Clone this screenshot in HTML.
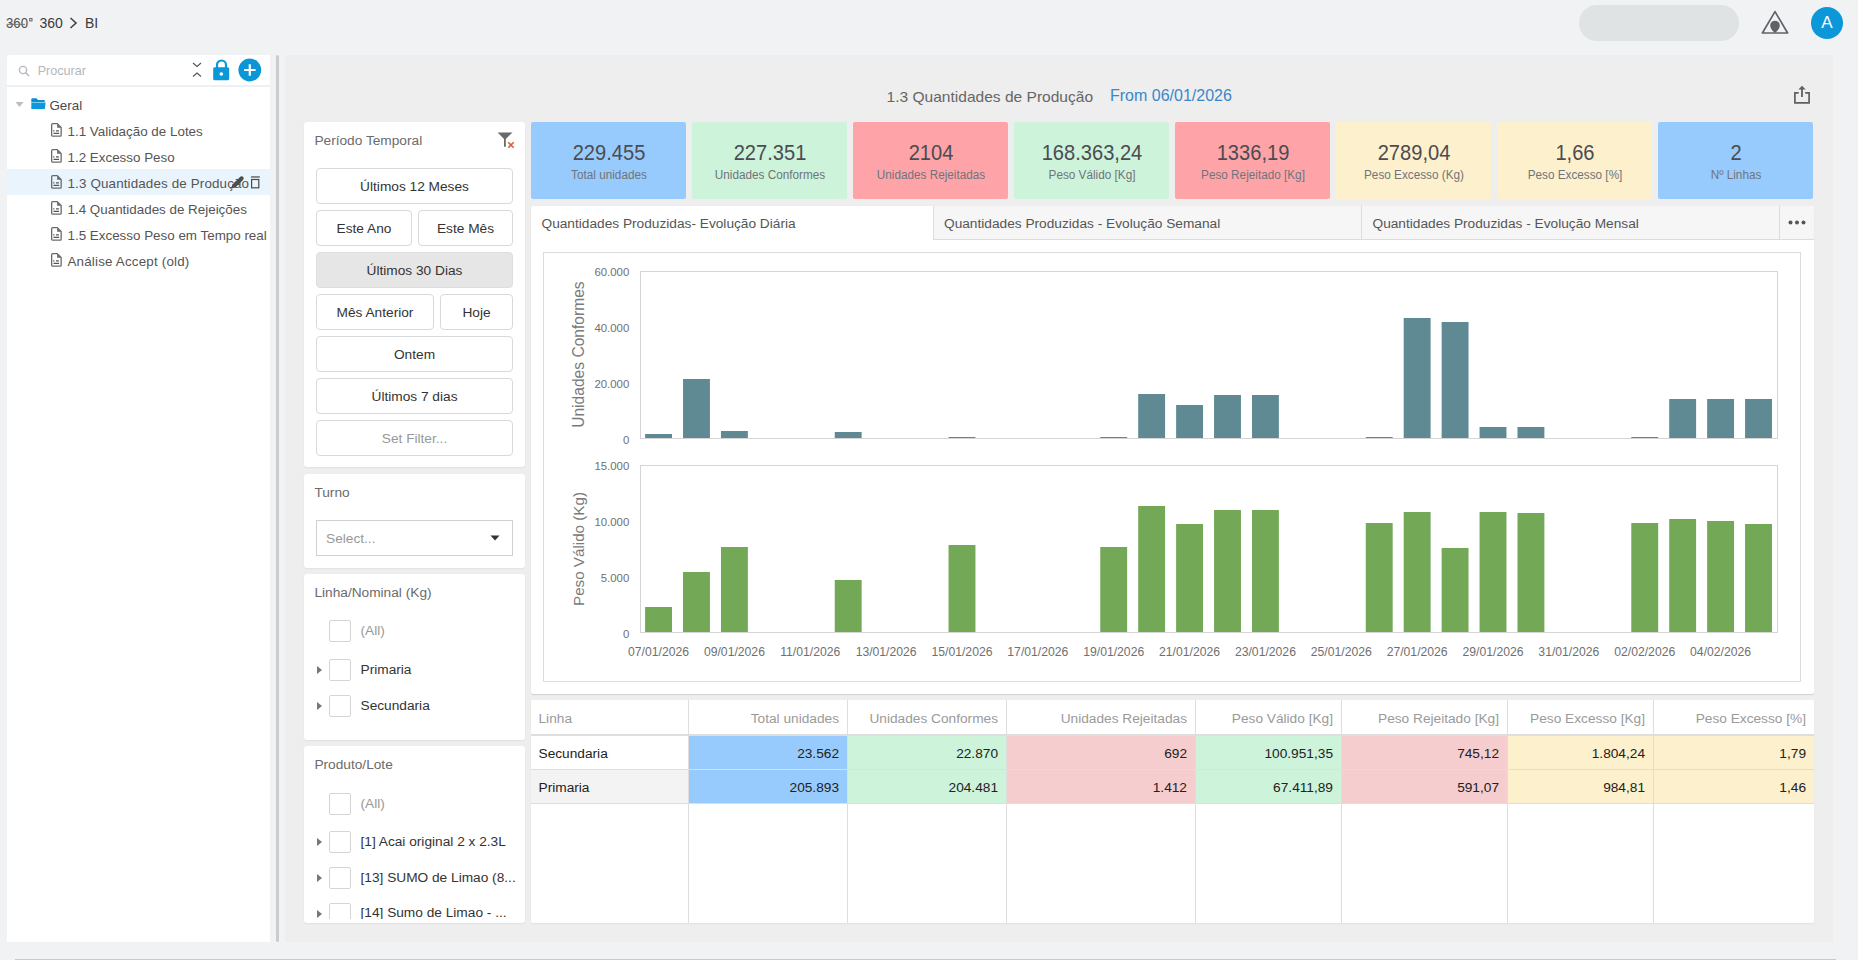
<!DOCTYPE html>
<html><head><meta charset="utf-8">
<style>
*{box-sizing:border-box;margin:0;padding:0}
html,body{width:1858px;height:960px;overflow:hidden;background:#f1f2f4;font-family:"Liberation Sans",sans-serif;color:#333;position:relative}
.a{position:absolute;white-space:nowrap}
.t{position:absolute;white-space:nowrap;line-height:1}
/* top bar */
#crumb{left:6px;top:15px;font-size:14px;color:#333}
#pill{left:1579px;top:5px;width:160px;height:36px;border-radius:18px;background:#dfe3e4}
#avatar{left:1811px;top:7px;width:32px;height:32px;border-radius:50%;background:#0c97d9;color:#fff;font-size:17px;text-align:center;line-height:32px}
/* left panel */
#left{left:7px;top:55px;width:263px;height:887px;background:#fff;border-top-left-radius:3px}
#sep{left:7px;top:85px;width:263px;height:2px;background:#eef0f2}
#scroll{left:276px;top:55px;width:3px;height:887px;background:#cbccd1;border-radius:2px}
.tree{font-size:13.4px;color:#555}
/* main */
#main{left:285px;top:55px;width:1548px;height:887px;background:#eeeeee}
.panel{position:absolute;background:#fff;border-radius:3px;box-shadow:0 1px 2px rgba(0,0,0,.06)}
.ptitle{position:absolute;font-size:13.7px;color:#6b6b6b;white-space:nowrap;line-height:1}
.btn{position:absolute;height:36px;border:1px solid #d9d9d9;border-radius:4px;background:#fff;font-size:13.7px;color:#333;display:flex;align-items:center;justify-content:center;white-space:nowrap}
.cb{position:absolute;width:22px;height:22px;border:1px solid #d4d4d4;border-radius:2px;background:#fff}
.cbt{position:absolute;font-size:13.7px;color:#333;white-space:nowrap;line-height:1}
.tri{position:absolute;width:0;height:0;border-top:4px solid transparent;border-bottom:4px solid transparent;border-left:5px solid #777}
.card{position:absolute;top:122px;width:155px;height:77px;border-radius:2px;text-align:center}
.card .v{position:absolute;left:0;right:0;top:143px;font-size:20px;color:#444;line-height:1}
.card .l{position:absolute;left:0;right:0;font-size:11.8px;color:#6b6f75;line-height:1}
.tab{position:absolute;top:206px;height:34px;font-size:13.7px;color:#555;white-space:nowrap}
.th{position:absolute;font-size:13.7px;color:#9a9a9a;white-space:nowrap;line-height:1}
.td{position:absolute;font-size:13.7px;color:#222;white-space:nowrap;line-height:1}
</style></head><body>
<div class="a" id="pill"></div>
<div class="a" id="avatar">A</div>
<div class="a" id="left"></div>
<div class="a" id="sep"></div>
<div class="a" id="scroll"></div>
<div class="a" id="main"></div>
<svg class="a" style="left:4px;top:14px" width="32" height="18" viewBox="0 0 32 18"><text x="2" y="14" font-family="Liberation Sans" font-size="13.8" fill="#505050" textLength="22" lengthAdjust="spacingAndGlyphs">360</text><path d="M2.5 10.4 H21" stroke="#6f6f6f" stroke-width="0.9"/><rect x="25.7" y="4.5" width="2.3" height="2.4" fill="none" stroke="#666" stroke-width="1"/></svg>
<div class="t" style="top:16.10px;font-size:14px;left:39.4px;color:#3a3a3a;">360</div>
<svg class="a" style="left:69px;top:17px" width="9" height="12" viewBox="0 0 9 12"><path d="M1.5 1 L7 6 L1.5 11" fill="none" stroke="#444" stroke-width="1.6"/></svg>
<div class="t" style="top:16.10px;font-size:14px;left:85px;color:#3a3a3a;">BI</div>
<svg class="a" style="left:1760px;top:9px" width="30" height="27" viewBox="0 0 30 27"><path d="M15 2.6 L27.6 24 L2.4 24 Z" fill="none" stroke="#616167" stroke-width="1.7" stroke-linejoin="round"/><path d="M10.2 16.5 a4.8 4.8 0 1 1 9.6 0 c0 3-2.6 5.5-4.8 7.5 c-2.2-2-4.8-4.5-4.8-7.5z" fill="#616167"/></svg>
<svg class="a" style="left:18px;top:65px" width="13" height="12" viewBox="0 0 13 12"><circle cx="5" cy="5" r="3.6" fill="none" stroke="#b4b8bf" stroke-width="1.4"/><path d="M7.6 7.6 L11 11" stroke="#b4b8bf" stroke-width="1.5"/></svg>
<div class="t" style="top:64.92px;font-size:12.6px;left:37.7px;color:#b3b7bd;">Procurar</div>
<svg class="a" style="left:192px;top:61px" width="10" height="17" viewBox="0 0 10 17"><path d="M1 2 L5 5.5 L9 2 M1 15.5 L5 12 L9 15.5" fill="none" stroke="#555" stroke-width="1.1"/></svg>
<svg class="a" style="left:213px;top:59px" width="17" height="22" viewBox="0 0 17 22"><path d="M4 9 V6 a4.5 4.5 0 0 1 9 0 V9" fill="none" stroke="#0a98d8" stroke-width="2.2"/><rect x="0.2" y="8.2" width="16" height="13" rx="1.5" fill="#0a98d8"/><circle cx="8.3" cy="15" r="1.8" fill="#fff"/></svg>
<svg class="a" style="left:238px;top:58px" width="24" height="24" viewBox="0 0 24 24"><circle cx="11.8" cy="12" r="11.4" fill="#0b96d6"/><path d="M11.8 6.2 V17.8 M6 12 H17.6" stroke="#fff" stroke-width="2.2"/></svg>
<svg class="a" style="left:15px;top:101px" width="9" height="7" viewBox="0 0 9 7"><path d="M0.5 1 L8.5 1 L4.5 6 Z" fill="#b9bdc3"/></svg>
<svg class="a" style="left:31px;top:98px" width="15" height="12" viewBox="0 0 15 12"><path d="M0.3 1.2 Q0.3 0.3 1.2 0.3 H5.5 L7 2 H13 Q13.8 2 13.8 2.8 V4 H0.3 Z" fill="#0a8fd6"/><path d="M0.3 4.6 H14.6 L13.8 11 H0.3 Z" fill="#0a98de"/></svg>
<div class="t" style="top:99.28px;font-size:13.4px;left:49.4px;color:#4a4a4a;">Geral</div>
<div class="a" style="left:7px;top:169px;width:263px;height:26px;background:#e9f4fc"></div>
<svg class="a" style="left:51px;top:123px" width="12" height="14" viewBox="0 0 12 14"><path d="M1.7 0.65 H6.2 L10.15 4.6 V12.2 Q10.15 13.05 9.3 13.05 H1.5 Q0.65 13.05 0.65 12.2 V1.7 Q0.65 0.65 1.7 0.65 Z" fill="none" stroke="#6a6a6a" stroke-width="1.3"/><path d="M6.1 0.65 V4.7 H10.15 Z" fill="#6a6a6a"/><path d="M2.2 7.9 H3.4 M5 7.9 H7.9 M2.5 10.4 H8.1" stroke="#555" stroke-width="1.2"/></svg>
<div class="t" style="top:124.98px;font-size:13.4px;left:67.5px;color:#555;">1.1 Validação de Lotes</div>
<svg class="a" style="left:51px;top:149px" width="12" height="14" viewBox="0 0 12 14"><path d="M1.7 0.65 H6.2 L10.15 4.6 V12.2 Q10.15 13.05 9.3 13.05 H1.5 Q0.65 13.05 0.65 12.2 V1.7 Q0.65 0.65 1.7 0.65 Z" fill="none" stroke="#6a6a6a" stroke-width="1.3"/><path d="M6.1 0.65 V4.7 H10.15 Z" fill="#6a6a6a"/><path d="M2.2 7.9 H3.4 M5 7.9 H7.9 M2.5 10.4 H8.1" stroke="#555" stroke-width="1.2"/></svg>
<div class="t" style="top:150.98px;font-size:13.4px;left:67.5px;color:#555;">1.2 Excesso Peso</div>
<svg class="a" style="left:51px;top:175px" width="12" height="14" viewBox="0 0 12 14"><path d="M1.7 0.65 H6.2 L10.15 4.6 V12.2 Q10.15 13.05 9.3 13.05 H1.5 Q0.65 13.05 0.65 12.2 V1.7 Q0.65 0.65 1.7 0.65 Z" fill="none" stroke="#6a6a6a" stroke-width="1.3"/><path d="M6.1 0.65 V4.7 H10.15 Z" fill="#6a6a6a"/><path d="M2.2 7.9 H3.4 M5 7.9 H7.9 M2.5 10.4 H8.1" stroke="#555" stroke-width="1.2"/></svg>
<div class="t" style="top:176.98px;font-size:13.4px;left:67.5px;color:#555;letter-spacing:0.14px;">1.3 Quantidades de Produção</div>
<svg class="a" style="left:51px;top:201px" width="12" height="14" viewBox="0 0 12 14"><path d="M1.7 0.65 H6.2 L10.15 4.6 V12.2 Q10.15 13.05 9.3 13.05 H1.5 Q0.65 13.05 0.65 12.2 V1.7 Q0.65 0.65 1.7 0.65 Z" fill="none" stroke="#6a6a6a" stroke-width="1.3"/><path d="M6.1 0.65 V4.7 H10.15 Z" fill="#6a6a6a"/><path d="M2.2 7.9 H3.4 M5 7.9 H7.9 M2.5 10.4 H8.1" stroke="#555" stroke-width="1.2"/></svg>
<div class="t" style="top:202.98px;font-size:13.4px;left:67.5px;color:#555;">1.4 Quantidades de Rejeições</div>
<svg class="a" style="left:51px;top:227px" width="12" height="14" viewBox="0 0 12 14"><path d="M1.7 0.65 H6.2 L10.15 4.6 V12.2 Q10.15 13.05 9.3 13.05 H1.5 Q0.65 13.05 0.65 12.2 V1.7 Q0.65 0.65 1.7 0.65 Z" fill="none" stroke="#6a6a6a" stroke-width="1.3"/><path d="M6.1 0.65 V4.7 H10.15 Z" fill="#6a6a6a"/><path d="M2.2 7.9 H3.4 M5 7.9 H7.9 M2.5 10.4 H8.1" stroke="#555" stroke-width="1.2"/></svg>
<div class="t" style="top:228.98px;font-size:13.4px;left:67.5px;color:#555;">1.5 Excesso Peso em Tempo real</div>
<svg class="a" style="left:51px;top:253px" width="12" height="14" viewBox="0 0 12 14"><path d="M1.7 0.65 H6.2 L10.15 4.6 V12.2 Q10.15 13.05 9.3 13.05 H1.5 Q0.65 13.05 0.65 12.2 V1.7 Q0.65 0.65 1.7 0.65 Z" fill="none" stroke="#6a6a6a" stroke-width="1.3"/><path d="M6.1 0.65 V4.7 H10.15 Z" fill="#6a6a6a"/><path d="M2.2 7.9 H3.4 M5 7.9 H7.9 M2.5 10.4 H8.1" stroke="#555" stroke-width="1.2"/></svg>
<div class="t" style="top:254.98px;font-size:13.4px;left:67.5px;color:#555;letter-spacing:0.18px;">Análise Accept (old)</div>
<svg class="a" style="left:229px;top:174px" width="16" height="16" viewBox="0 0 16 16"><path d="M2.3 14.6 L3.4 10.6 L10.8 3.2 L13.8 6.2 L6.4 13.6 Z" fill="#4d4d4d"/><circle cx="12.6" cy="4.3" r="2" fill="#4d4d4d"/></svg>
<svg class="a" style="left:250px;top:175px" width="11" height="14" viewBox="0 0 11 14"><rect x="1" y="1.2" width="8.8" height="1.5" fill="#6a6a6a"/><rect x="1.6" y="4.5" width="7.2" height="8.3" fill="none" stroke="#4a4a4a" stroke-width="1.2"/></svg>
<div class="t" style="top:88.56px;font-size:15.55px;left:886.5px;color:#666;">1.3 Quantidades de Produção</div>
<div class="t" style="top:88.20px;font-size:16px;left:1110px;color:#3b86c8;">From 06/01/2026</div>
<svg class="a" style="left:1793px;top:85px" width="18" height="20" viewBox="0 0 18 20"><path d="M5.7 7.9 H1.9 V17.9 H16.1 V7.9 H12.2" fill="none" stroke="#5f5f5f" stroke-width="1.7"/><path d="M5.4 4.6 L9 0.8 L12.7 4.6 Z" fill="#5f5f5f"/><path d="M9 3.5 V11.9" stroke="#5f5f5f" stroke-width="1.8"/></svg>
<div class="panel" style="left:304px;top:122px;width:221px;height:345px"></div>
<div class="t" style="top:134.04px;font-size:13.7px;left:314.4px;color:#6b6b6b;">Período Temporal</div>
<svg class="a" style="left:497px;top:131px" width="19" height="19" viewBox="0 0 19 19"><path d="M0.6 1.4 H15.5 L8.8 8 V15.7 H7 V8 Z" fill="#6a6a6a"/><path d="M11.3 11.3 L16.7 16.7 M16.7 11.3 L11.3 16.7" stroke="#d8603a" stroke-width="1.6"/></svg>
<div class="btn" style="left:316px;top:168px;width:197px;color:#333;">Últimos 12 Meses</div>
<div class="btn" style="left:316px;top:210px;width:96px;color:#333;">Este Ano</div>
<div class="btn" style="left:418px;top:210px;width:95px;color:#333;">Este Mês</div>
<div class="btn" style="left:316px;top:252px;width:197px;color:#333;background:#e6e6e6;border-color:#dedede;">Últimos 30 Dias</div>
<div class="btn" style="left:316px;top:294px;width:118px;color:#333;">Mês Anterior</div>
<div class="btn" style="left:440px;top:294px;width:73px;color:#333;">Hoje</div>
<div class="btn" style="left:316px;top:336px;width:197px;color:#333;">Ontem</div>
<div class="btn" style="left:316px;top:378px;width:197px;color:#333;">Últimos 7 dias</div>
<div class="btn" style="left:316px;top:420px;width:197px;color:#999;">Set Filter...</div>
<div class="panel" style="left:304px;top:474px;width:221px;height:94px"></div>
<div class="t" style="top:486.34px;font-size:13.7px;left:314.4px;color:#6b6b6b;">Turno</div>
<div class="a" style="left:316px;top:520px;width:197px;height:36px;border:1px solid #d0d0d0;background:#fff"></div>
<div class="t" style="top:531.54px;font-size:13.7px;left:326px;color:#999;">Select...</div>
<svg class="a" style="left:490px;top:535px" width="10" height="6" viewBox="0 0 10 6"><path d="M0.5 0.5 H9.5 L5 5.5 Z" fill="#333"/></svg>
<div class="panel" style="left:304px;top:574px;width:221px;height:166px"></div>
<div class="t" style="top:586.04px;font-size:13.7px;left:314.4px;color:#6b6b6b;">Linha/Nominal (Kg)</div>
<div class="cb" style="left:329px;top:620px"></div>
<div class="t" style="top:624.04px;font-size:13.7px;left:360.5px;color:#999;">(All)</div>
<div class="cb" style="left:329px;top:659px"></div>
<div class="tri" style="left:317px;top:666px"></div>
<div class="t" style="top:663.04px;font-size:13.7px;left:360.5px;color:#333;">Primaria</div>
<div class="cb" style="left:329px;top:695px"></div>
<div class="tri" style="left:317px;top:702px"></div>
<div class="t" style="top:699.04px;font-size:13.7px;left:360.5px;color:#333;">Secundaria</div>
<div class="panel" style="left:304px;top:746px;width:221px;height:177px;overflow:hidden">
</div>
<div class="t" style="top:757.84px;font-size:13.7px;left:314.4px;color:#6b6b6b;">Produto/Lote</div>
<div class="cb" style="left:329px;top:793px"></div>
<div class="t" style="top:797.04px;font-size:13.7px;left:360.5px;color:#999;">(All)</div>
<div class="cb" style="left:329px;top:831px"></div>
<div class="tri" style="left:317px;top:838px"></div>
<div class="t" style="top:835.04px;font-size:13.7px;left:360.5px;color:#333;">[1] Acai original 2 x 2.3L</div>
<div class="cb" style="left:329px;top:867px"></div>
<div class="tri" style="left:317px;top:874px"></div>
<div class="t" style="top:871.04px;font-size:13.7px;left:360.5px;color:#333;">[13] SUMO de Limao (8...</div>
<div class="a" style="left:304px;top:903px;width:221px;height:16px;overflow:hidden"><div class="cb" style="left:25px;top:0px"></div><div class="tri" style="left:13px;top:6.5px"></div><div class="t" style="left:56.5px;top:3.40px;font-size:13.7px;color:#333">[14] Sumo de Limao - ...</div></div>
<div class="card" style="left:531.0px;background:#98cbfd"></div>
<div class="t" style="top:143.40px;font-size:21.5px;left:308.5px;width:600px;text-align:center;color:#4b4b52;transform:scaleX(0.935);">229.455</div>
<div class="t" style="top:169.20px;font-size:12.5px;left:308.5px;width:600px;text-align:center;color:#70747a;transform:scaleX(0.94);">Total unidades</div>
<div class="card" style="left:692.0px;background:#cdf3da"></div>
<div class="t" style="top:143.40px;font-size:21.5px;left:469.5px;width:600px;text-align:center;color:#4b4b52;transform:scaleX(0.935);">227.351</div>
<div class="t" style="top:169.20px;font-size:12.5px;left:469.5px;width:600px;text-align:center;color:#70747a;transform:scaleX(0.94);">Unidades Conformes</div>
<div class="card" style="left:853.0px;background:#fea4a9"></div>
<div class="t" style="top:143.40px;font-size:21.5px;left:630.5px;width:600px;text-align:center;color:#4b4b52;transform:scaleX(0.935);">2104</div>
<div class="t" style="top:169.20px;font-size:12.5px;left:630.5px;width:600px;text-align:center;color:#70747a;transform:scaleX(0.94);">Unidades Rejeitadas</div>
<div class="card" style="left:1014.0px;background:#cdf3da"></div>
<div class="t" style="top:143.40px;font-size:21.5px;left:791.5px;width:600px;text-align:center;color:#4b4b52;transform:scaleX(0.935);">168.363,24</div>
<div class="t" style="top:169.20px;font-size:12.5px;left:791.5px;width:600px;text-align:center;color:#70747a;transform:scaleX(0.94);">Peso Válido [Kg]</div>
<div class="card" style="left:1175.0px;background:#fea4a9"></div>
<div class="t" style="top:143.40px;font-size:21.5px;left:952.5px;width:600px;text-align:center;color:#4b4b52;transform:scaleX(0.935);">1336,19</div>
<div class="t" style="top:169.20px;font-size:12.5px;left:952.5px;width:600px;text-align:center;color:#70747a;transform:scaleX(0.94);">Peso Rejeitado [Kg]</div>
<div class="card" style="left:1336.0px;background:#fdf0cc"></div>
<div class="t" style="top:143.40px;font-size:21.5px;left:1113.5px;width:600px;text-align:center;color:#4b4b52;transform:scaleX(0.935);">2789,04</div>
<div class="t" style="top:169.20px;font-size:12.5px;left:1113.5px;width:600px;text-align:center;color:#70747a;transform:scaleX(0.94);">Peso Excesso (Kg)</div>
<div class="card" style="left:1497.0px;background:#fdf0cc"></div>
<div class="t" style="top:143.40px;font-size:21.5px;left:1274.5px;width:600px;text-align:center;color:#4b4b52;transform:scaleX(0.935);">1,66</div>
<div class="t" style="top:169.20px;font-size:12.5px;left:1274.5px;width:600px;text-align:center;color:#70747a;transform:scaleX(0.94);">Peso Excesso [%]</div>
<div class="card" style="left:1658.0px;background:#98cbfd"></div>
<div class="t" style="top:143.40px;font-size:21.5px;left:1435.5px;width:600px;text-align:center;color:#4b4b52;transform:scaleX(0.935);">2</div>
<div class="t" style="top:169.20px;font-size:12.5px;left:1435.5px;width:600px;text-align:center;color:#70747a;transform:scaleX(0.94);">Nº Linhas</div>
<div class="panel" style="left:531px;top:206px;width:1283px;height:488px;border-radius:2px;box-shadow:0 1px 1px rgba(0,0,0,.13)"></div>
<div class="a" style="left:933px;top:206px;width:881px;height:34px;background:#f6f6f6;border-bottom:1px solid #dcdcdc;border-left:1px solid #dcdcdc;border-top-right-radius:2px"></div>
<div class="a" style="left:1361px;top:206px;width:1px;height:34px;background:#dcdcdc"></div>
<div class="a" style="left:1779px;top:206px;width:1px;height:34px;background:#dcdcdc"></div>
<div class="t" style="top:217.04px;font-size:13.7px;left:541.5px;color:#555;">Quantidades Produzidas- Evolução Diária</div>
<div class="t" style="top:217.04px;font-size:13.7px;left:944px;color:#555;">Quantidades Produzidas - Evolução Semanal</div>
<div class="t" style="top:217.04px;font-size:13.7px;left:1372.5px;color:#555;">Quantidades Produzidas - Evolução Mensal</div>
<svg class="a" style="left:1788px;top:219px" width="18" height="7" viewBox="0 0 18 7"><circle cx="2.5" cy="3.5" r="2" fill="#555"/><circle cx="9" cy="3.5" r="2" fill="#555"/><circle cx="15.5" cy="3.5" r="2" fill="#555"/></svg>
<div class="a" style="left:543px;top:252px;height:430px;border:1px solid #dcdcdc;width:1258px"></div>
<svg class="a" style="left:0;top:0" width="1858" height="960" viewBox="0 0 1858 960" font-family="Liberation Sans"><rect x="640.5" y="271.5" width="1137" height="167" fill="none" stroke="#d4d4d4" stroke-width="1"/><rect x="640.5" y="465.5" width="1137" height="167" fill="none" stroke="#d4d4d4" stroke-width="1"/><rect x="645.10" y="434" width="26.9" height="4" fill="#5f8a94"/><rect x="683.03" y="379" width="26.9" height="59" fill="#5f8a94"/><rect x="720.96" y="431" width="26.9" height="7" fill="#5f8a94"/><rect x="834.75" y="432" width="26.9" height="6" fill="#5f8a94"/><rect x="948.54" y="437" width="26.9" height="1" fill="#5f8a94"/><rect x="1100.26" y="437" width="26.9" height="1" fill="#5f8a94"/><rect x="1138.19" y="394" width="26.9" height="44" fill="#5f8a94"/><rect x="1176.12" y="405" width="26.9" height="33" fill="#5f8a94"/><rect x="1214.05" y="395" width="26.9" height="43" fill="#5f8a94"/><rect x="1251.98" y="395" width="26.9" height="43" fill="#5f8a94"/><rect x="1365.77" y="437" width="26.9" height="1" fill="#5f8a94"/><rect x="1403.70" y="318" width="26.9" height="120" fill="#5f8a94"/><rect x="1441.63" y="322" width="26.9" height="116" fill="#5f8a94"/><rect x="1479.56" y="427" width="26.9" height="11" fill="#5f8a94"/><rect x="1517.49" y="427" width="26.9" height="11" fill="#5f8a94"/><rect x="1631.28" y="437" width="26.9" height="1" fill="#5f8a94"/><rect x="1669.21" y="399" width="26.9" height="39" fill="#5f8a94"/><rect x="1707.14" y="399" width="26.9" height="39" fill="#5f8a94"/><rect x="1745.07" y="399" width="26.9" height="39" fill="#5f8a94"/><rect x="645.10" y="607" width="26.9" height="25" fill="#73a857"/><rect x="683.03" y="572" width="26.9" height="60" fill="#73a857"/><rect x="720.96" y="547" width="26.9" height="85" fill="#73a857"/><rect x="834.75" y="580" width="26.9" height="52" fill="#73a857"/><rect x="948.54" y="545" width="26.9" height="87" fill="#73a857"/><rect x="1100.26" y="547" width="26.9" height="85" fill="#73a857"/><rect x="1138.19" y="506" width="26.9" height="126" fill="#73a857"/><rect x="1176.12" y="524" width="26.9" height="108" fill="#73a857"/><rect x="1214.05" y="510" width="26.9" height="122" fill="#73a857"/><rect x="1251.98" y="510" width="26.9" height="122" fill="#73a857"/><rect x="1365.77" y="523" width="26.9" height="109" fill="#73a857"/><rect x="1403.70" y="512" width="26.9" height="120" fill="#73a857"/><rect x="1441.63" y="548" width="26.9" height="84" fill="#73a857"/><rect x="1479.56" y="512" width="26.9" height="120" fill="#73a857"/><rect x="1517.49" y="513" width="26.9" height="119" fill="#73a857"/><rect x="1631.28" y="523" width="26.9" height="109" fill="#73a857"/><rect x="1669.21" y="519" width="26.9" height="113" fill="#73a857"/><rect x="1707.14" y="521" width="26.9" height="111" fill="#73a857"/><rect x="1745.07" y="524" width="26.9" height="108" fill="#73a857"/><text x="629.3" y="276" font-size="11.4" fill="#707070" text-anchor="end">60.000</text><text x="629.3" y="332.3" font-size="11.4" fill="#707070" text-anchor="end">40.000</text><text x="629.3" y="388" font-size="11.4" fill="#707070" text-anchor="end">20.000</text><text x="629.3" y="443.8" font-size="11.4" fill="#707070" text-anchor="end">0</text><text x="629.3" y="470.3" font-size="11.4" fill="#707070" text-anchor="end">15.000</text><text x="629.3" y="526.2" font-size="11.4" fill="#707070" text-anchor="end">10.000</text><text x="629.3" y="582" font-size="11.4" fill="#707070" text-anchor="end">5.000</text><text x="629.3" y="638" font-size="11.4" fill="#707070" text-anchor="end">0</text><text x="658.55" y="656.3" font-size="12.2" fill="#707070" text-anchor="middle">07/01/2026</text><text x="734.41" y="656.3" font-size="12.2" fill="#707070" text-anchor="middle">09/01/2026</text><text x="810.27" y="656.3" font-size="12.2" fill="#707070" text-anchor="middle">11/01/2026</text><text x="886.13" y="656.3" font-size="12.2" fill="#707070" text-anchor="middle">13/01/2026</text><text x="961.99" y="656.3" font-size="12.2" fill="#707070" text-anchor="middle">15/01/2026</text><text x="1037.85" y="656.3" font-size="12.2" fill="#707070" text-anchor="middle">17/01/2026</text><text x="1113.71" y="656.3" font-size="12.2" fill="#707070" text-anchor="middle">19/01/2026</text><text x="1189.57" y="656.3" font-size="12.2" fill="#707070" text-anchor="middle">21/01/2026</text><text x="1265.43" y="656.3" font-size="12.2" fill="#707070" text-anchor="middle">23/01/2026</text><text x="1341.29" y="656.3" font-size="12.2" fill="#707070" text-anchor="middle">25/01/2026</text><text x="1417.15" y="656.3" font-size="12.2" fill="#707070" text-anchor="middle">27/01/2026</text><text x="1493.01" y="656.3" font-size="12.2" fill="#707070" text-anchor="middle">29/01/2026</text><text x="1568.87" y="656.3" font-size="12.2" fill="#707070" text-anchor="middle">31/01/2026</text><text x="1644.73" y="656.3" font-size="12.2" fill="#707070" text-anchor="middle">02/02/2026</text><text x="1720.59" y="656.3" font-size="12.2" fill="#707070" text-anchor="middle">04/02/2026</text><text transform="translate(584.2,354.6) rotate(-90)" font-size="15.6" fill="#7a7a7a" text-anchor="middle">Unidades Conformes</text><text transform="translate(584.2,549) rotate(-90)" font-size="15.2" fill="#7a7a7a" text-anchor="middle">Peso Válido (Kg)</text></svg>
<div class="panel" style="left:531px;top:700px;width:1283px;height:223px;border-radius:2px"></div>
<div class="a" style="left:531px;top:735.0px;width:157px;height:34.3px;background:#fff"></div>
<div class="a" style="left:688px;top:735.0px;width:159px;height:34.3px;background:#98cbfd"></div>
<div class="a" style="left:847px;top:735.0px;width:159px;height:34.3px;background:#cdf3da"></div>
<div class="a" style="left:1006px;top:735.0px;width:189px;height:34.3px;background:#f5cdcf"></div>
<div class="a" style="left:1195px;top:735.0px;width:146px;height:34.3px;background:#cdf3da"></div>
<div class="a" style="left:1341px;top:735.0px;width:166px;height:34.3px;background:#f5cdcf"></div>
<div class="a" style="left:1507px;top:735.0px;width:146px;height:34.3px;background:#fdf0cc"></div>
<div class="a" style="left:1653px;top:735.0px;width:161px;height:34.3px;background:#fdf0cc"></div>
<div class="a" style="left:531px;top:769.3px;width:157px;height:34.3px;background:#f3f3f3"></div>
<div class="a" style="left:688px;top:769.3px;width:159px;height:34.3px;background:#98cbfd"></div>
<div class="a" style="left:847px;top:769.3px;width:159px;height:34.3px;background:#cdf3da"></div>
<div class="a" style="left:1006px;top:769.3px;width:189px;height:34.3px;background:#f5cdcf"></div>
<div class="a" style="left:1195px;top:769.3px;width:146px;height:34.3px;background:#cdf3da"></div>
<div class="a" style="left:1341px;top:769.3px;width:166px;height:34.3px;background:#f5cdcf"></div>
<div class="a" style="left:1507px;top:769.3px;width:146px;height:34.3px;background:#fdf0cc"></div>
<div class="a" style="left:1653px;top:769.3px;width:161px;height:34.3px;background:#fdf0cc"></div>
<div class="a" style="left:531px;top:733.5px;width:1283px;height:2px;background:#dedede"></div>
<div class="a" style="left:531px;top:769px;width:1283px;height:1px;background:#dedede"></div>
<div class="a" style="left:531px;top:803px;width:1283px;height:1px;background:#dedede"></div>
<div class="a" style="left:688px;top:700px;width:1px;height:223px;background:#dedede"></div>
<div class="a" style="left:847px;top:700px;width:1px;height:223px;background:#dedede"></div>
<div class="a" style="left:1006px;top:700px;width:1px;height:223px;background:#dedede"></div>
<div class="a" style="left:1195px;top:700px;width:1px;height:223px;background:#dedede"></div>
<div class="a" style="left:1341px;top:700px;width:1px;height:223px;background:#dedede"></div>
<div class="a" style="left:1507px;top:700px;width:1px;height:223px;background:#dedede"></div>
<div class="a" style="left:1653px;top:700px;width:1px;height:223px;background:#dedede"></div>
<div class="t" style="top:711.84px;font-size:13.7px;left:538.5px;color:#9a9a9a;">Linha</div>
<div class="t" style="top:711.84px;font-size:13.7px;right:1019px;color:#9a9a9a;">Total unidades</div>
<div class="t" style="top:711.84px;font-size:13.7px;right:860px;color:#9a9a9a;">Unidades Conformes</div>
<div class="t" style="top:711.84px;font-size:13.7px;right:671px;color:#9a9a9a;">Unidades Rejeitadas</div>
<div class="t" style="top:711.84px;font-size:13.7px;right:525px;color:#9a9a9a;">Peso Válido [Kg]</div>
<div class="t" style="top:711.84px;font-size:13.7px;right:359px;color:#9a9a9a;">Peso Rejeitado [Kg]</div>
<div class="t" style="top:711.84px;font-size:13.7px;right:213px;color:#9a9a9a;">Peso Excesso [Kg]</div>
<div class="t" style="top:711.84px;font-size:13.7px;right:52px;color:#9a9a9a;">Peso Excesso [%]</div>
<div class="t" style="top:747.04px;font-size:13.7px;left:538.5px;color:#222;">Secundaria</div>
<div class="t" style="top:747.04px;font-size:13.7px;right:1019px;color:#222;">23.562</div>
<div class="t" style="top:747.04px;font-size:13.7px;right:860px;color:#222;">22.870</div>
<div class="t" style="top:747.04px;font-size:13.7px;right:671px;color:#222;">692</div>
<div class="t" style="top:747.04px;font-size:13.7px;right:525px;color:#222;">100.951,35</div>
<div class="t" style="top:747.04px;font-size:13.7px;right:359px;color:#222;">745,12</div>
<div class="t" style="top:747.04px;font-size:13.7px;right:213px;color:#222;">1.804,24</div>
<div class="t" style="top:747.04px;font-size:13.7px;right:52px;color:#222;">1,79</div>
<div class="t" style="top:781.34px;font-size:13.7px;left:538.5px;color:#222;">Primaria</div>
<div class="t" style="top:781.34px;font-size:13.7px;right:1019px;color:#222;">205.893</div>
<div class="t" style="top:781.34px;font-size:13.7px;right:860px;color:#222;">204.481</div>
<div class="t" style="top:781.34px;font-size:13.7px;right:671px;color:#222;">1.412</div>
<div class="t" style="top:781.34px;font-size:13.7px;right:525px;color:#222;">67.411,89</div>
<div class="t" style="top:781.34px;font-size:13.7px;right:359px;color:#222;">591,07</div>
<div class="t" style="top:781.34px;font-size:13.7px;right:213px;color:#222;">984,81</div>
<div class="t" style="top:781.34px;font-size:13.7px;right:52px;color:#222;">1,46</div>
<div class="a" style="left:15px;top:959px;width:1821px;height:1px;background:#c9cacd"></div>
</body></html>
